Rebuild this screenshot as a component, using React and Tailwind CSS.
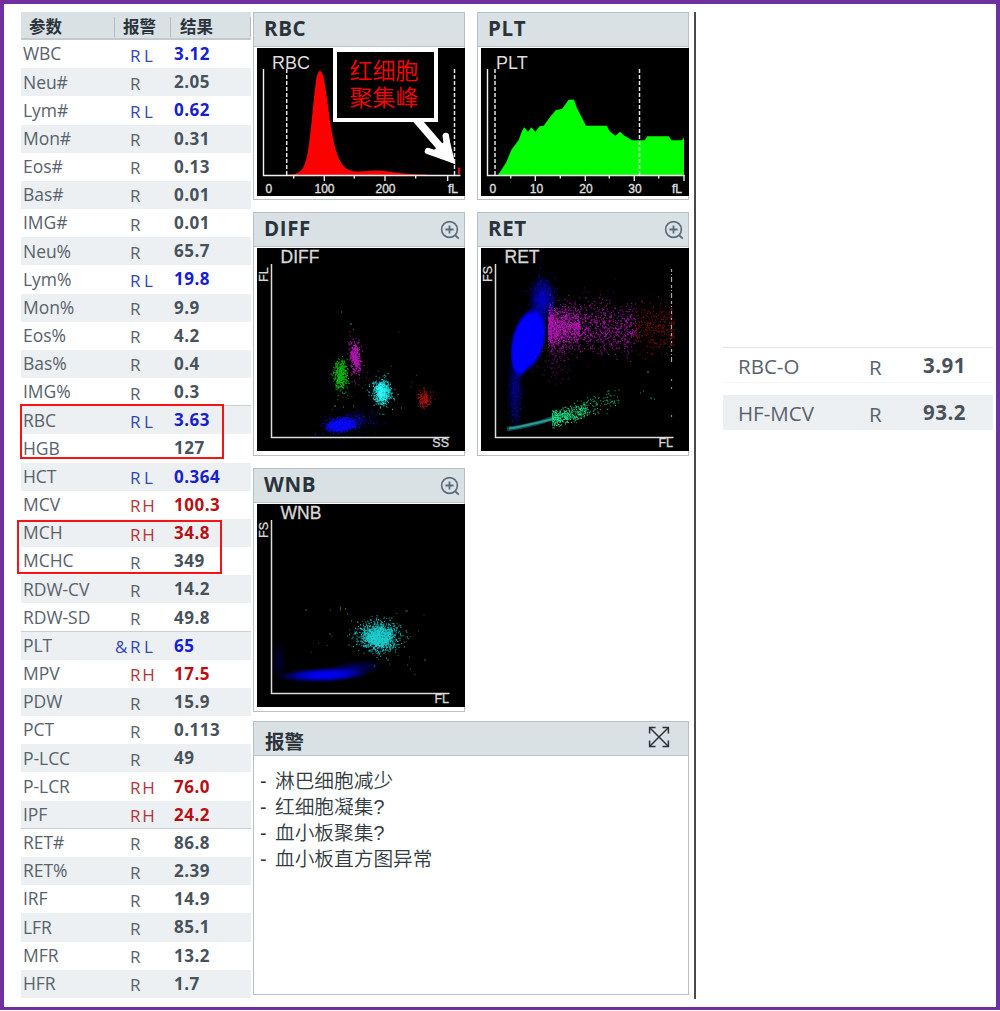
const results = [
  { name: "WBC", flag: "R", level: "L", value: "3.12" },
  { name: "Neu#", flag: "R", value: "2.05" },
  { name: "Lym#", flag: "R", level: "L", value: "0.62" },
  { name: "Mon#", flag: "R", value: "0.31" },
  { name: "Eos#", flag: "R", value: "0.13" },
  { name: "Bas#", flag: "R", value: "0.01" },
  { name: "IMG#", flag: "R", value: "0.01" },
  { name: "Neu%", flag: "R", value: "65.7" },
  { name: "Lym%", flag: "R", level: "L", value: "19.8" },
  { name: "Mon%", flag: "R", value: "9.9" },
  { name: "Eos%", flag: "R", value: "4.2" },
  { name: "Bas%", flag: "R", value: "0.4" },
  { name: "IMG%", flag: "R", value: "0.3" },
  { name: "RBC", flag: "R", level: "L", value: "3.63", line: true },
  { name: "HGB", value: "127" },
  { name: "HCT", flag: "R", level: "L", value: "0.364" },
  { name: "MCV", flag: "R", level: "H", value: "100.3" },
  { name: "MCH", flag: "R", level: "H", value: "34.8" },
  { name: "MCHC", flag: "R", value: "349" },
  { name: "RDW-CV", flag: "R", value: "14.2" },
  { name: "RDW-SD", flag: "R", value: "49.8" },
  { name: "PLT", mark: "&", flag: "R", level: "L", value: "65", line: true },
  { name: "MPV", flag: "R", level: "H", value: "17.5" },
  { name: "PDW", flag: "R", value: "15.9" },
  { name: "PCT", flag: "R", value: "0.113" },
  { name: "P-LCC", flag: "R", value: "49" },
  { name: "P-LCR", flag: "R", level: "H", value: "76.0" },
  { name: "IPF", flag: "R", level: "H", value: "24.2" },
  { name: "RET#", flag: "R", value: "86.8", line: true },
  { name: "RET%", flag: "R", value: "2.39" },
  { name: "IRF", flag: "R", value: "14.9" },
  { name: "LFR", flag: "R", value: "85.1" },
  { name: "MFR", flag: "R", value: "13.2" },
  { name: "HFR", flag: "R", value: "1.7" },
];

const alarms = ["淋巴细胞减少", "红细胞凝集?", "血小板聚集?", "血小板直方图异常"];

const flagColor = { L: "text-[#3344b8]", H: "text-[#b8323c]" };
const valueColor = { L: "text-[#1620cc]", H: "text-[#b80f14]" };

// seeded so that the clouds look the same on every render
const makeRandom = (seed) => {
  let s = seed;
  return () => {
    s = (s * 16807) % 2147483647;
    return s / 2147483647;
  };
};

const cloud = ({ seed, n, x, y, sx, sy, slope = 0, size = 1 }) => {
  const rnd = makeRandom(seed * 7919);
  let d = "";
  for (let i = 0; i < n; i++) {
    const r = Math.sqrt(-2 * Math.log(rnd() + 0.0001));
    const a = rnd() * Math.PI * 2;
    const dx = r * Math.cos(a) * sx;
    const dy = r * Math.sin(a) * sy + dx * slope;
    d += `M${(x + dx).toFixed(1)} ${(y + dy).toFixed(1)}h${size}`;
  }
  return d;
};

// band of points that gets thinner from left to right
const band = ({ seed, n, x1, x2, y1, y2, s1, s2, power = 1 }) => {
  const rnd = makeRandom(seed * 7919);
  let d = "";
  for (let i = 0; i < n; i++) {
    const t = Math.pow(rnd(), power);
    const g = rnd() + rnd() + rnd() + rnd() - 2;
    const x = x1 + (x2 - x1) * t;
    const y = y1 + (y2 - y1) * t + g * (s1 + (s2 - s1) * t) * 1.7;
    d += `M${x.toFixed(1)} ${y.toFixed(1)}h1`;
  }
  return d;
};

const Dots = ({ d, color, opacity = 1 }) => (
  <path d={d} stroke={color} strokeWidth="1.1" opacity={opacity} fill="none" />
);

const ZoomIcon = () => (
  <svg className="w-5 h-5" viewBox="0 0 20 20" fill="none" stroke="#5d6a7c" strokeWidth="1.6">
    <circle cx="9.5" cy="9.5" r="7.9" />
    <path d="M5.5 9.5h8M9.5 5.5v8M15 15l3.7 3.7" strokeWidth="1.8" />
  </svg>
);

const ExpandIcon = () => (
  <svg className="mb-[3px] w-[22px] h-[22px]" viewBox="0 0 22 22" fill="none" stroke="#2c3238" strokeWidth="1.5">
    <path d="M2 2l18 18M20 2L2 20" />
    <path d="M1.6 7.5V1.6h5.9M14.5 1.6h5.9v5.9M20.4 14.5v5.9h-5.9M7.5 20.4H1.6v-5.9" />
  </svg>
);

const Panel = ({ title, zoom, children }) => (
  <div className="flex flex-col border border-[#b9c0c4] bg-white">
    <div className="flex h-[34px] shrink-0 items-center justify-between border-b border-[#bcc4c8] bg-[#d9e1e4] pl-[10px] pr-1">
      <h2 className="pb-[2px] text-[20.5px] leading-none font-bold tracking-[0.6px] text-[#2b333b]">{title}</h2>
      {zoom && <ZoomIcon />}
    </div>
    <div className="mt-px pl-[3px]">{children}</div>
  </div>
);

const Histogram = ({ title, ticks, labels, gates, children }) => (
  <svg className="block h-[148px] w-[208px] bg-black font-['Liberation_Sans',sans-serif]" viewBox="0 0 208 148">
    {children}
    <path d="M6.5 21V127.5H203.5" stroke="#f0f0f0" strokeWidth="1.4" fill="none" />
    {ticks.map((x, i) => (
      <path key={x} d={`M${x} 127v${i % 2 ? 6 : 3.5}`} stroke="#e8e8e8" strokeWidth="1.4" />
    ))}
    {gates.map((x) => (
      <path key={x} d={`M${x} 21V127`} stroke="#e4e4e4" strokeWidth="1.5" strokeDasharray="4 2" />
    ))}
    <text x="15" y="21" fontSize="18" fill="#dedede">{title}</text>
    <g fontSize="12" fill="#e0e0e0" stroke="#e0e0e0" strokeWidth="0.3">
      <text x="8.5" y="144.5">0</text>
      {labels.map(([x, text]) => (
        <text key={text} x={x} y="144.5" textAnchor="middle">{text}</text>
      ))}
      <text x="191" y="144.5">fL</text>
    </g>
  </svg>
);

const Scatter = ({ title, xLabel, yLabel, children }) => (
  <svg className="block h-[203px] w-[208px] bg-black font-['Liberation_Sans',sans-serif]" viewBox="0 0 208 203">
    {children}
    <path d="M14.5 16V189.5H192.5" stroke="#dcdcdc" strokeWidth="1.5" fill="none" />
    <g fill="#d8d8d8" stroke="#d8d8d8" strokeWidth="0.3">
      <text x="23.5" y="14.5" fontSize="17.5">{title}</text>
      <text x="192" y="199.3" fontSize="12.5" textAnchor="end">{xLabel}</text>
      <text transform="translate(10.5 34) rotate(-90)" fontSize="12.5">{yLabel}</text>
    </g>
  </svg>
);

const RbcPlot = () => (
  <div className="relative">
    <Histogram
      title="RBC"
      ticks={[36.7, 67.3, 97.3, 128, 158.7, 190.7]}
      labels={[[67.5, "100"], [128.5, "200"]]}
      gates={[29.7, 197.5]}
    >
      <path
        d="M29 127L38 126C45 124 48 119 51 103C54 87 56 54 59 33C61 20 65 20 67 32C70 45 72 71 76 90C79 106 84 119 92 122C100 125 110 122.5 120 122.5C133 123 140 126 170 126.5V127Z"
        fill="#ff0000"
      />
      <path d="M202 119.5v7" stroke="#cf1020" strokeWidth="2.5" />
    </Histogram>
    <div className="absolute top-0 left-[76px] flex h-[74px] w-[105px] items-center justify-center border-4 border-white bg-black text-[23px] leading-[27px] text-[#f00]">
      <p className="w-[72px] font-['Liberation_Sans','Noto_Sans_CJK_SC',sans-serif] font-[350]">红细胞聚集峰</p>
    </div>
    <svg className="absolute top-[72px] left-[155px] h-12 w-12" viewBox="0 0 48 48" fill="none" stroke="#fff">
      <path d="M4 -1L36 36" strokeWidth="8" />
      <path d="M16 31L37 38.5L33.800 16" strokeWidth="6.500" strokeLinecap="round" />
      <path d="M18 33L43.500 44.500L37 18Z" fill="#fff" stroke="none" />
    </svg>
  </div>
);

const PltPlot = () => (
  <Histogram
    title="PLT"
    ticks={[29.7, 54.3, 79.3, 104.3, 128.3, 153.3, 177.7, 203]}
    labels={[[55.5, "10"], [105, "20"], [154, "30"]]}
    gates={[14, 158.5]}
  >
    <path
      d="M17 127L25.3 114.3L30.3 102L37.7 92L41 83L43.3 79.3L47 83.7L50.3 79.3L54.3 83.7L58.7 78.3L62.7 77.7L69.3 68.7L75 62L81 61L87.7 51.7H93L96 60.3L105 77.7H126L128.3 83L134.3 87.7L139.3 83.7L142.7 87.3L147.7 90.3L151 92.3H163.7L166.3 88.3H187.7L190.3 92.3H201L203 89.3V127Z"
      fill="#00ff00"
    />
  </Histogram>
);

const DiffPlot = () => (
  <Scatter title="DIFF" xLabel="SS" yLabel="FL">
    <defs>
      <radialGradient id="diffBlue">
        <stop offset="0.5" stopColor="#0808ff" />
        <stop offset="1" stopColor="#0808ff" stopOpacity="0" />
      </radialGradient>
    </defs>
    <ellipse cx="84" cy="177.5" rx="19" ry="8" fill="url(#diffBlue)" transform="rotate(-8 84 178)" />
    <Dots d={cloud({ seed: 1, n: 420, x: 86, y: 176, sx: 8, sy: 3.5, slope: -0.15 })} color="#0808f0" />
    <Dots d={cloud({ seed: 2, n: 160, x: 98, y: 172, sx: 12, sy: 5 })} color="#0606a8" opacity={0.6} />
    <Dots d={cloud({ seed: 3, n: 480, x: 83, y: 127, sx: 3.2, sy: 7 })} color="#0cae0c" />
    <Dots d={cloud({ seed: 4, n: 430, x: 98, y: 109, sx: 2.6, sy: 7.5, slope: 0.8 })} color="#a815a8" />
    <Dots d={cloud({ seed: 5, n: 560, x: 124.5, y: 144.5, sx: 4.8, sy: 6.2 })} color="#12c9c9" />
    <Dots d={cloud({ seed: 6, n: 220, x: 124.5, y: 144.5, sx: 2.8, sy: 4.2 })} color="#30f4f4" />
    <Dots d={cloud({ seed: 7, n: 170, x: 166.5, y: 151, sx: 3.3, sy: 4 })} color="#a01010" />
    <Dots d={cloud({ seed: 8, n: 26, x: 118, y: 140, sx: 25, sy: 18 })} color="#2b7060" opacity={0.7} />
    <Dots d="M84 64h1M93 76h2M77 158h2M86 159h1M96 158h1M144 160h1" color="#2f9a55" />
  </Scatter>
);

const RetPlot = () => (
  <Scatter title="RET" xLabel="FL" yLabel="FS">
    <defs>
      <radialGradient id="retBlue">
        <stop offset="0.78" stopColor="#0000ff" />
        <stop offset="1" stopColor="#0000ff" stopOpacity="0" />
      </radialGradient>
      <radialGradient id="retTop">
        <stop offset="0" stopColor="#0000d8" />
        <stop offset="1" stopColor="#0000c8" stopOpacity="0" />
      </radialGradient>
    </defs>
    <ellipse cx="61" cy="52" rx="15" ry="26" fill="url(#retTop)" />
    <ellipse cx="34" cy="138" rx="9" ry="44" fill="url(#retTop)" opacity="0.6" />
    <ellipse cx="47.5" cy="92" rx="17.5" ry="34" fill="url(#retBlue)" transform="rotate(14 47 92)" />
    <ellipse cx="40" cy="104" rx="10" ry="26" fill="url(#retBlue)" transform="rotate(4 40 104)" />
    <Dots d={cloud({ seed: 11, n: 320, x: 63, y: 49, sx: 5.5, sy: 9 })} color="#0505b4" opacity={0.8} />
    <Dots d={cloud({ seed: 12, n: 100, x: 34, y: 150, sx: 3, sy: 15 })} color="#0505b0" opacity={0.8} />
    <Dots d={band({ seed: 13, n: 1250, x1: 68, x2: 155, y1: 79, y2: 80, s1: 12, s2: 12, power: 1.5 })} color="#9c129c" />
    <Dots d={band({ seed: 14, n: 620, x1: 67, x2: 98, y1: 80, y2: 80, s1: 9, s2: 7, power: 1.5 })} color="#b414b4" />
    <Dots d={cloud({ seed: 15, n: 170, x: 73, y: 107, sx: 8, sy: 12 })} color="#701070" opacity={0.7} />
    <Dots d={cloud({ seed: 16, n: 110, x: 104, y: 76, sx: 24, sy: 20 })} color="#701070" opacity={0.6} />
    <Dots d={band({ seed: 17, n: 330, x1: 153, x2: 193, y1: 79, y2: 79, s1: 12, s2: 13 })} color="#921010" opacity={0.8} />
    <path d="M190.500 21V115" stroke="#a8a8a8" strokeWidth="1.200" strokeDasharray="3 2 1 2 5 3" />
    <path d="M190.500 131v2M190.500 139v2M190.500 167v2" stroke="#8a8a8a" strokeWidth="1.200" />
    <path d="M190.500 60V100" stroke="#801010" strokeWidth="1.200" strokeDasharray="3 4" />
    <path d="M26 181C42 179 56 176 72 170" stroke="#1c8a8a" strokeWidth="4.500" opacity="0.55" fill="none" />
    <path d="M28 180.500C42 178.500 56 175 72 171" stroke="#30b0a8" strokeWidth="2" opacity="0.8" fill="none" />
    <Dots d={band({ seed: 18, n: 380, x1: 71, x2: 106, y1: 171, y2: 162, s1: 4, s2: 4, power: 1.4 })} color="#16dc84" />
    <Dots d={band({ seed: 19, n: 120, x1: 90, x2: 138, y1: 166, y2: 150, s1: 4, s2: 6.5 })} color="#1a9f66" />
    <Dots d="M159 145h1M162 143h1M169 150h2M173 151h1M166 124h2" color="#1a9460" />
  </Scatter>
);

const WnbPlot = () => (
  <Scatter title="WNB" xLabel="FL" yLabel="FS">
    <defs>
      <radialGradient id="wnbBlue">
        <stop offset="0.1" stopColor="#0000ff" />
        <stop offset="0.5" stopColor="#0000f0" stopOpacity="0.8" />
        <stop offset="1" stopColor="#0000d0" stopOpacity="0" />
      </radialGradient>
      <radialGradient id="wnbFaint">
        <stop offset="0" stopColor="#0000b0" stopOpacity="0.8" />
        <stop offset="1" stopColor="#0000b0" stopOpacity="0" />
      </radialGradient>
    </defs>
    <ellipse cx="90" cy="167" rx="37" ry="9" fill="url(#wnbFaint)" transform="rotate(-10 90 167)" />
    <ellipse cx="66" cy="171" rx="45" ry="7.500" fill="url(#wnbBlue)" transform="rotate(-2 66 171)" />
    <ellipse cx="22" cy="157" rx="8" ry="22" fill="url(#wnbFaint)" opacity="0.35" />
    <Dots d={cloud({ seed: 21, n: 1000, x: 121, y: 133, sx: 9.5, sy: 7 })} color="#12a8a8" />
    <Dots d={cloud({ seed: 22, n: 650, x: 121, y: 133, sx: 8, sy: 5.8 })} color="#1ccaca" />
    <Dots d={cloud({ seed: 23, n: 40, x: 115, y: 132, sx: 26, sy: 15 })} color="#1c6e62" opacity={0.8} />
    <Dots d="M83 104h1M83 106h1M88 105h1M90 110h1M94 117h1M100 118h1" color="#a08a30" />
    <Dots d="M48 106h2M148 107h3M167 156h2M150 161h1M153 165h1M72 130h2M130 156h2M132 160h1" color="#2a6a50" />
  </Scatter>
);

const ResultTable = () => (
  <div className="relative h-[986px] w-[230px] text-[17px] text-[#58626c]">
    <div className="flex h-7 items-center border-b-2 border-[#c3cacd] bg-[#d9e1e4] pt-1 text-[16.5px] font-bold text-[#2b333b]">
      <span className="w-[94px] border-r border-[#b4bcc0] pl-2 leading-5">参数</span>
      <span className="w-[56px] border-r border-[#b4bcc0] pl-2 leading-5">报警</span>
      <span className="grow border-r border-[#b4bcc0] pl-[9px] leading-5">结果</span>
    </div>
    <div className="flex h-[958px] flex-col">
      {results.map((row) => (
        <div
          key={row.name}
          className={`flex flex-1 items-center pl-[2px] leading-none even:bg-[#edf0f2] ${row.line ? "shadow-[0_-1px_0_#c9cfd2]" : ""}`}
        >
          <span className="w-[92px] text-[17.5px] tracking-[-0.05px]">{row.name}</span>
          <span className={`flex w-[59px] pt-[2px] ${flagColor[row.level] || ""}`}>
            <span className="w-[15px]">{row.mark}</span>
            <span className="w-[10px]">{row.flag}</span>
            <span className="w-[17px] text-center">{row.level}</span>
          </span>
          <span className={`pb-px font-bold tracking-[0.5px] ${valueColor[row.level] || "text-[#47525c]"}`}>
            {row.value}
          </span>
        </div>
      ))}
    </div>
    <div className="absolute top-[392px] -left-px h-[55px] w-[204px] border-2 border-[#f51414]" />
    <div className="absolute top-[508px] -left-1 h-[54px] w-[205px] border-2 border-[#f51414]" />
  </div>
);

const App = () => {
  return (
    <div className="h-[1011px] w-[1000px] bg-white font-['Open_Sans','Noto_Sans_CJK_SC',sans-serif]">
      <div className="flex h-[1010px] border-4 border-b-3 border-[#7030a0] pt-2 pl-[17px]">
        <ResultTable />

        <div className="ml-[2px] flex w-[436px] flex-col gap-[9px]">
          <div className="grid grid-cols-[212px_212px] grid-rows-[188px_244px_244px] gap-3">
            <Panel title="RBC"><RbcPlot /></Panel>
            <Panel title="PLT"><PltPlot /></Panel>
            <Panel title="DIFF" zoom><DiffPlot /></Panel>
            <Panel title="RET" zoom><RetPlot /></Panel>
            <Panel title="WNB" zoom><WnbPlot /></Panel>
          </div>
          <div className="h-[274px] border border-[#b9c0c4]">
            <div className="flex h-[34px] items-center justify-between border-b border-[#bcc4c8] bg-[#d9e1e4] pr-[18px] pl-[11px] text-[#2b333b]">
              <h2 className="pt-[6px] text-[19.5px] leading-none font-bold">报警</h2>
              <ExpandIcon />
            </div>
            <ul className="pt-3 pl-[6px] text-[19.7px] leading-[26px] text-[#333b42]">
              {alarms.map((alarm) => (
                <li key={alarm} className="flex font-['Liberation_Sans','Noto_Sans_CJK_SC',sans-serif] font-[350]">
                  <span className="w-[15px]">-</span>
                  <span>{alarm}</span>
                </li>
              ))}
            </ul>
          </div>
        </div>

        <div className="ml-[5px] h-[987px] w-[2px] bg-[#4a4a4a]" />

        <div className="mt-[335px] ml-[27px] w-[270px] text-[20.5px] leading-none text-[#58626c]">
          <div className="flex h-9 items-center border-t border-b border-t-[#dfe3e6] border-b-[#f4f5f6] pt-[2px] pl-[15px]">
            <span className="w-[131px]">RBC-O</span>
            <span className="w-[54px] pt-[2px]">R</span>
            <span className="pb-[2px] font-bold tracking-[0.5px] text-[#47525c]">3.91</span>
          </div>
          <div className="mt-3 flex h-[35px] items-center bg-[#edf0f2] pt-px pl-[15px]">
            <span className="w-[131px]">HF-MCV</span>
            <span className="w-[54px] pt-[2px]">R</span>
            <span className="pb-[2px] font-bold tracking-[0.5px] text-[#47525c]">93.2</span>
          </div>
        </div>
      </div>
    </div>
  );
};

export default App;
